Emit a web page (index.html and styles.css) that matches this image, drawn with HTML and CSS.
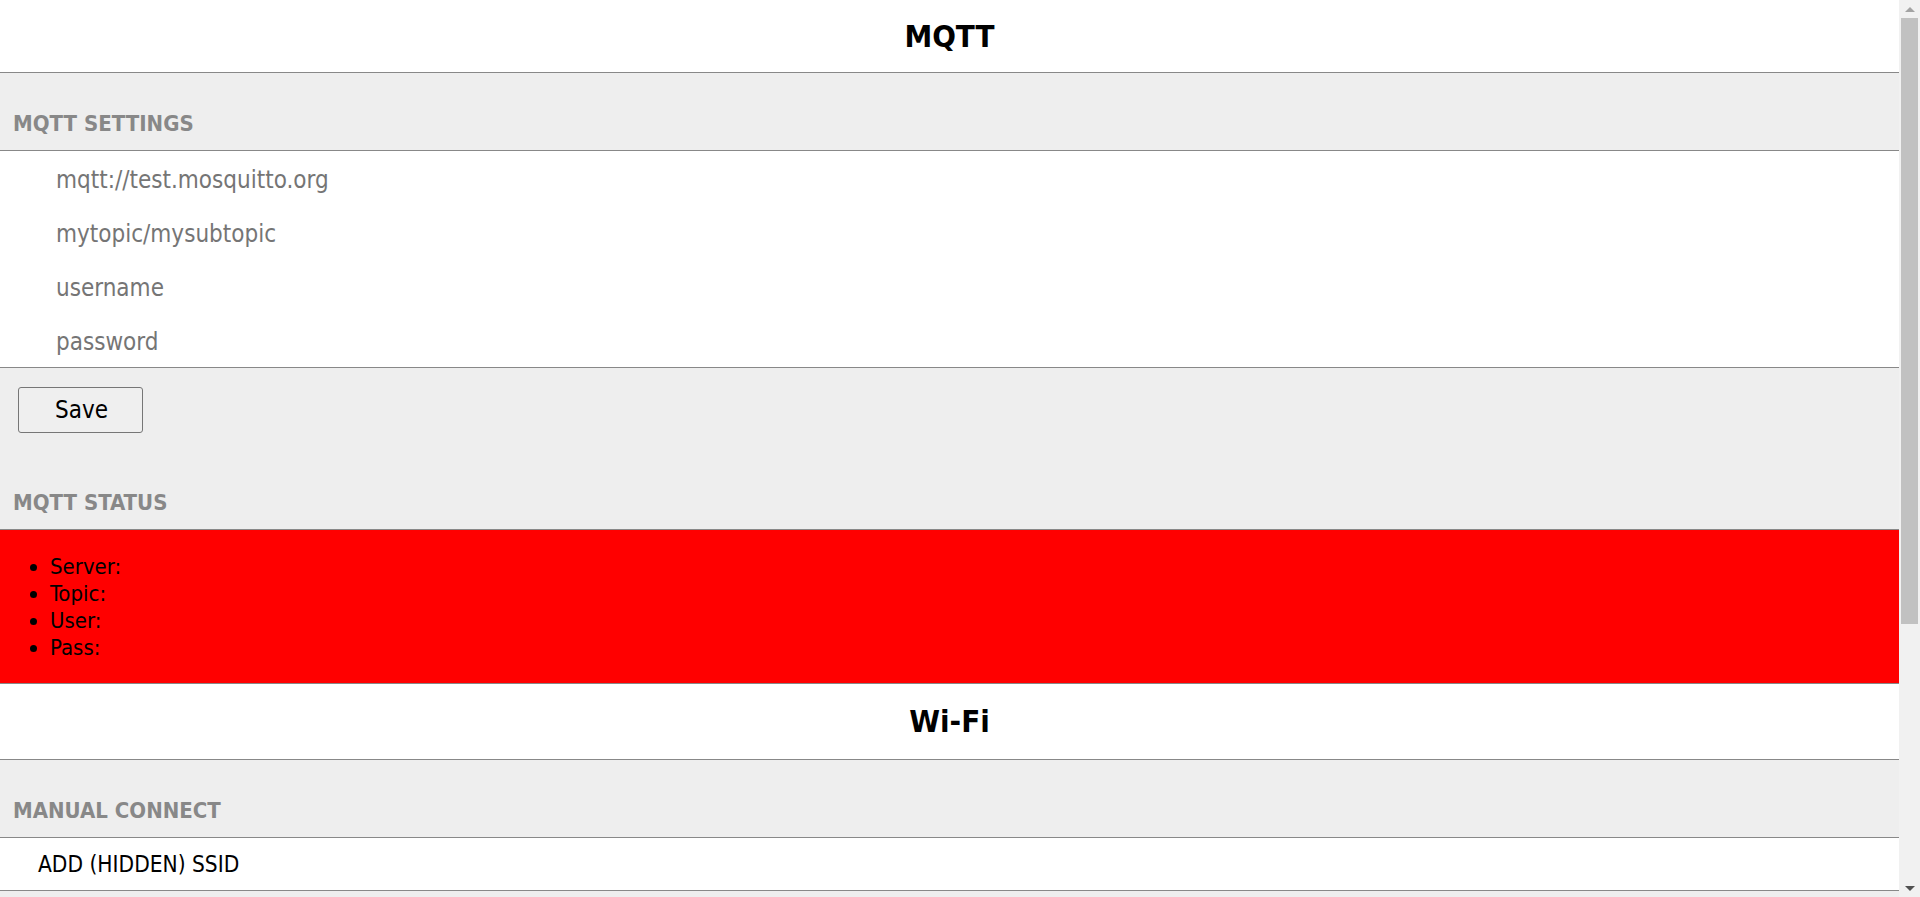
FILE: index.html
```html
<!DOCTYPE html>
<html lang="en">
<head>
<meta charset="utf-8">
<title>MQTT</title>
<link rel="stylesheet" href="styles.css">
</head>
<body>
<main class="page">
  <section class="panel">
    <h1 class="title">MQTT</h1>
    <h2 class="label">MQTT SETTINGS</h2>
    <form class="fields">
      <input class="field" type="text" placeholder="mqtt://test.mosquitto.org">
      <input class="field" type="text" placeholder="mytopic/mysubtopic">
      <input class="field" type="text" placeholder="username">
      <input class="field" type="password" placeholder="password">
    </form>
    <div class="actions"><button class="btn" type="button">Save</button></div>
    <h2 class="label">MQTT STATUS</h2>
    <ul class="status">
      <li>Server:</li>
      <li>Topic:</li>
      <li>User:</li>
      <li>Pass:</li>
    </ul>
  </section>
  <section class="panel">
    <h1 class="title title-wifi">Wi-Fi</h1>
    <h2 class="label">MANUAL CONNECT</h2>
    <div class="row">ADD (HIDDEN) SSID</div>
    <div class="filler"></div>
  </section>
</main>
<div class="scrollbar" aria-hidden="true">
  <div class="sb-btn"><span class="sb-up"></span></div>
  <div class="sb-track"><div class="sb-thumb"></div></div>
  <div class="sb-btn"><span class="sb-down"></span></div>
</div>
</body>
</html>
```

FILE: styles.css
```css
html {
  background: #eeeeee;
}
body {
  margin: 0;
  display: flex;
  align-items: flex-start;
  font-family: "DejaVu Sans Condensed", "DejaVu Sans", sans-serif;
  font-stretch: condensed;
  color: #000;
  background: #eeeeee;
}
.page {
  flex: 1;
  min-width: 0;
}
.title {
  margin: 0;
  height: 72px;
  line-height: 72px;
  font-size: 31px;
  font-weight: bold;
  text-align: center;
  background: #ffffff;
  border-bottom: 1px solid #888888;
}
.title-wifi {
  height: 75px;
  line-height: 75px;
}
.label {
  margin: 0;
  padding: 38px 13px 13px;
  line-height: 26px;
  font-size: 22px;
  font-weight: bold;
  color: #888888;
  background: #eeeeee;
  border-bottom: 1px solid #888888;
}
.fields {
  margin: 0;
  background: #ffffff;
  border-bottom: 1px solid #888888;
}
.field {
  display: block;
  box-sizing: border-box;
  width: 100%;
  height: 54px;
  margin: 0;
  padding: 4px 0 0 56px;
  border: 0;
  outline: none;
  background: transparent;
  font-family: inherit;
  font-stretch: condensed;
  font-size: 24px;
  color: #000;
}
.field::placeholder {
  color: #757575;
}
.actions {
  display: flex;
  padding: 19px 18px;
  background: #eeeeee;
}
.btn {
  box-sizing: border-box;
  width: 125px;
  height: 46px;
  padding: 0 0 0 2px;
  font-family: inherit;
  font-stretch: condensed;
  font-size: 24px;
  color: #000;
  background: #efefef;
  border: 1px solid #767676;
  border-radius: 3px;
}
.status {
  margin: 0;
  padding: 23px 0 22px 50px;
  font-size: 22px;
  line-height: 27px;
  background: #ff0000;
  border-bottom: 1px solid #888888;
}
.row {
  height: 52px;
  line-height: 52px;
  padding-left: 38px;
  font-size: 22.5px;
  background: #ffffff;
  border-bottom: 1px solid #888888;
}
.filler {
  height: 383px;
  background: #eeeeee;
}
.scrollbar {
  position: sticky;
  top: 0;
  flex: 0 0 21px;
  height: 100vh;
  display: flex;
  flex-direction: column;
  background: #f1f1f1;
}
.sb-btn {
  flex: 0 0 18px;
  display: flex;
  align-items: center;
  justify-content: center;
}
.sb-up {
  width: 0;
  height: 0;
  border-left: 5px solid transparent;
  border-right: 5px solid transparent;
  border-bottom: 5px solid #a3a3a3;
}
.sb-down {
  width: 0;
  height: 0;
  border-left: 5px solid transparent;
  border-right: 5px solid transparent;
  border-top: 5px solid #505050;
}
.sb-track {
  flex: 1;
  padding: 0 2px;
}
.sb-thumb {
  height: 606px;
  background: #c1c1c1;
}
```
